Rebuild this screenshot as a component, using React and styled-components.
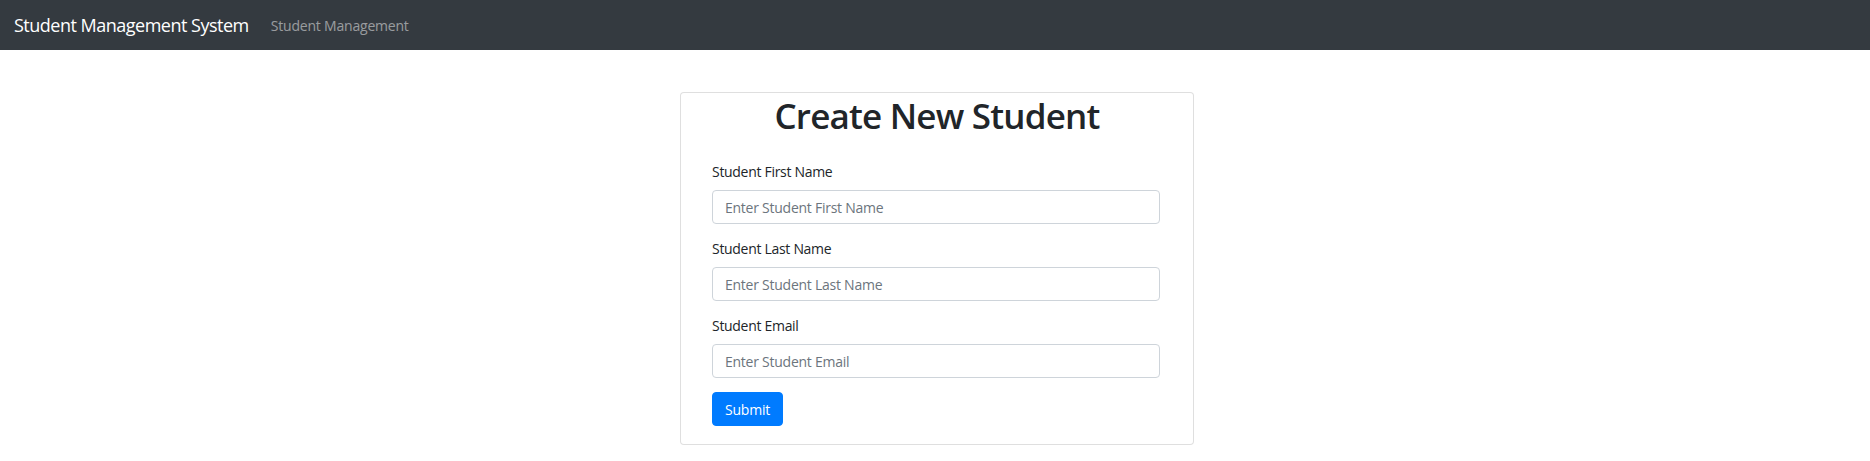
import React from 'react';
import styled, { createGlobalStyle } from 'styled-components';

const GlobalStyle = createGlobalStyle`
  * { box-sizing: border-box; }
  body {
    margin: 0;
    background: #fff;
    color: #212529;
    font-family: "Open Sans", "Noto Sans", sans-serif;
  }
`;

const NavBar = styled.nav`
  display: flex;
  align-items: center;
  height: 50px;
  padding: 0 14px;
  background: #343a40;
`;

const Brand = styled.a`
  font-size: 18px;
  letter-spacing: -0.5px;
  color: #fff;
  text-decoration: none;
  margin-right: 22px;
`;

const NavLink = styled.a`
  font-size: 14px;
  letter-spacing: -0.2px;
  color: rgba(255, 255, 255, 0.5);
  text-decoration: none;
`;

const Main = styled.main`
  padding: 42px 0 0 4px;
`;

const Card = styled.div`
  width: 514px;
  margin: 0 auto;
  border: 1px solid rgba(0, 0, 0, 0.125);
  border-radius: 4px;
  background: #fff;
`;

const Title = styled.h2`
  margin: 2px 0 0;
  font-size: 35px;
  font-weight: 600;
  letter-spacing: -0.8px;
  line-height: 42px;
  text-align: center;
  color: #212529;
`;

const Form = styled.form`
  padding: 24px 33px 18px 31px;
`;

const Group = styled.div`
  margin-bottom: 14px;
`;

const Label = styled.label`
  display: block;
  font-size: 14px;
  letter-spacing: -0.3px;
  line-height: 22px;
  margin-bottom: 7px;
  color: #212529;
`;

const Input = styled.input`
  display: block;
  width: 100%;
  height: 34px;
  padding: 0 12px;
  font-family: inherit;
  font-size: 14px;
  letter-spacing: -0.25px;
  color: #495057;
  border: 1px solid #ced4da;
  border-radius: 4px;
  background: #fff;
  &::placeholder { color: #6c757d; }
`;

const Button = styled.button`
  display: block;
  height: 34px;
  padding: 0 12px;
  font-family: inherit;
  font-size: 14px;
  letter-spacing: -0.2px;
  color: #fff;
  background: #007bff;
  border: 1px solid #007bff;
  border-radius: 4px;
`;

const fields = [
  { label: 'Student First Name', placeholder: 'Enter Student First Name' },
  { label: 'Student Last Name', placeholder: 'Enter Student Last Name' },
  { label: 'Student Email', placeholder: 'Enter Student Email' },
];

export default function App() {
  return (
    <>
      <GlobalStyle />
      <NavBar>
        <Brand href="#">Student Management System</Brand>
        <NavLink href="#">Student Management</NavLink>
      </NavBar>
      <Main>
        <Card>
          <Title>Create New Student</Title>
          <Form onSubmit={e => e.preventDefault()}>
            {fields.map(f => (
              <Group key={f.label}>
                <Label>{f.label}</Label>
                <Input type="text" placeholder={f.placeholder} />
              </Group>
            ))}
            <Button type="submit">Submit</Button>
          </Form>
        </Card>
      </Main>
    </>
  );
}
